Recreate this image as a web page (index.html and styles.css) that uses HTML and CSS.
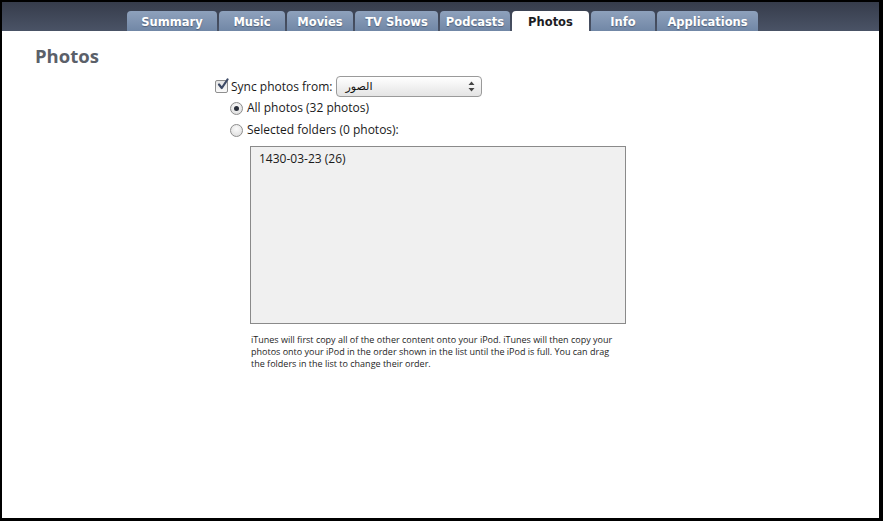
FILE: index.html
```html
<!DOCTYPE html>
<html>
<head>
<meta charset="utf-8">
<link rel="stylesheet" href="styles.css">
</head>
<body>
<div class="window">
  <div class="header">
    <div class="tab w-summary">Summary</div>
    <div class="tab w-music">Music</div>
    <div class="tab w-movies">Movies</div>
    <div class="tab w-tv">TV Shows</div>
    <div class="tab w-podcasts">Podcasts</div>
    <div class="tab active w-photos">Photos</div>
    <div class="tab w-info">Info</div>
    <div class="tab w-apps">Applications</div>
  </div>
  <div class="content">
    <h1 class="title">Photos</h1>
    <div class="form">
      <div class="row sync">
        <span class="checkbox">
          <svg width="14" height="14" viewBox="0 0 14 14"><path d="M3 6.5 L5.8 10 L11.5 1.5" fill="none" stroke="#3d4a66" stroke-width="2.2" stroke-linecap="round" stroke-linejoin="round"/></svg>
        </span>
        <span class="label">Sync photos from:</span>
        <div class="select">
          <span class="sel-text" dir="rtl">الصور</span>
          <svg class="arrows" width="7" height="11" viewBox="0 0 7 11"><path d="M3.5 0.5 L6.5 4 L0.5 4 Z M3.5 10.5 L6.5 7 L0.5 7 Z" fill="#444"/></svg>
        </div>
      </div>
      <div class="row radio-row">
        <span class="radio checked"><span class="dot"></span></span>
        <span class="label">All photos (32 photos)</span>
      </div>
      <div class="row radio-row">
        <span class="radio"></span>
        <span class="label">Selected folders (0 photos):</span>
      </div>
      <div class="list">
        <div class="list-item">1430-03-23 (26)</div>
      </div>
      <p class="note">iTunes will first copy all of the other content onto your iPod. iTunes will then copy your photos onto your iPod in the order shown in the list until the iPod is full. You can drag the folders in the list to change their order.</p>
    </div>
  </div>
</div>
</body>
</html>
```
FILE: styles.css
```css
* { box-sizing: border-box; }
html, body { margin: 0; padding: 0; background: #000; }
body { width: 883px; height: 521px; overflow: hidden; }
.window {
  width: 883px;
  height: 521px;
  border-style: solid;
  border-color: #000;
  border-width: 2px 4px 3px 2px;
  background: #fff;
  font-family: "Open Sans", "DejaVu Sans", sans-serif;
  color: #1a1a1a;
}
.header {
  height: 29px;
  display: flex;
  align-items: flex-end;
  gap: 2px;
  padding-left: 125px;
  background: linear-gradient(#363c4b, #4a5366);
}
.tab {
  height: 20px;
  display: flex;
  align-items: center;
  justify-content: center;
  border-radius: 4px 4px 0 0;
  background: linear-gradient(#8ea1bc, #7187a6);
  color: #fff;
  font-family: "DejaVu Sans", sans-serif;
  font-weight: bold;
  font-size: 11.5px;
  text-shadow: 0 1px 1px rgba(40,50,70,0.5);
  padding-top: 1px;
}
.tab.active {
  background: #fff;
  color: #1d1d24;
  text-shadow: none;
}
.w-summary { width: 90px; }
.w-music { width: 66px; }
.w-movies { width: 66px; }
.w-tv { width: 83px; }
.w-podcasts { width: 70px; }
.w-photos { width: 77px; }
.w-info { width: 64px; }
.w-apps { width: 101px; }

.content { padding-left: 33px; }
.title {
  margin: 13px 0 0;
  font-size: 18.5px;
  line-height: 24px;
  font-weight: bold;
  color: #5b6069;
}
.form {
  margin-left: 180px;
  margin-top: 8px;
  display: flex;
  flex-direction: column;
  align-items: flex-start;
}
.row {
  display: flex;
  align-items: center;
  height: 22px;
  font-size: 12px;
}
.row.sync { height: 21px; }
.label { line-height: 14px; }
.checkbox {
  width: 13px;
  height: 13px;
  border: 1px solid #8f8f8f;
  border-radius: 2px;
  background: linear-gradient(#e4e4e4, #fafafa);
  position: relative;
  margin-right: 3px;
}
.checkbox svg { position: absolute; left: 0; top: -3px; }
.select {
  margin-left: 3px;
  width: 146px;
  height: 21px;
  border: 1px solid #9a9a9a;
  border-radius: 4px;
  background: linear-gradient(#ffffff, #e4e4e4);
  display: flex;
  align-items: center;
  justify-content: space-between;
  padding: 0 6px 0 9px;
}
.sel-text {
  font-family: "DejaVu Sans", "Noto Sans", sans-serif;
  font-size: 11px;
  color: #111;
}
.radio-row { margin-left: 15px; }
.radio {
  width: 13px;
  height: 13px;
  border: 1px solid #8d8d8d;
  border-radius: 50%;
  background: radial-gradient(circle at 50% 35%, #fbfbfb, #d9d9d9);
  margin-right: 4px;
  display: flex;
  align-items: center;
  justify-content: center;
}
.dot {
  width: 5px;
  height: 5px;
  border-radius: 50%;
  background: #2a2f3a;
}
.list {
  margin-top: 5px;
  margin-left: 35px;
  width: 376px;
  height: 178px;
  border: 1px solid #8a8a8a;
  background: #f0f0f0;
  padding: 4px 8px;
}
.list-item { font-size: 12px; line-height: 16px; }
.note {
  margin: 10px 0 0 36px;
  width: 366px;
  font-size: 9px;
  line-height: 12px;
  color: #1e1e1e;
}
```
